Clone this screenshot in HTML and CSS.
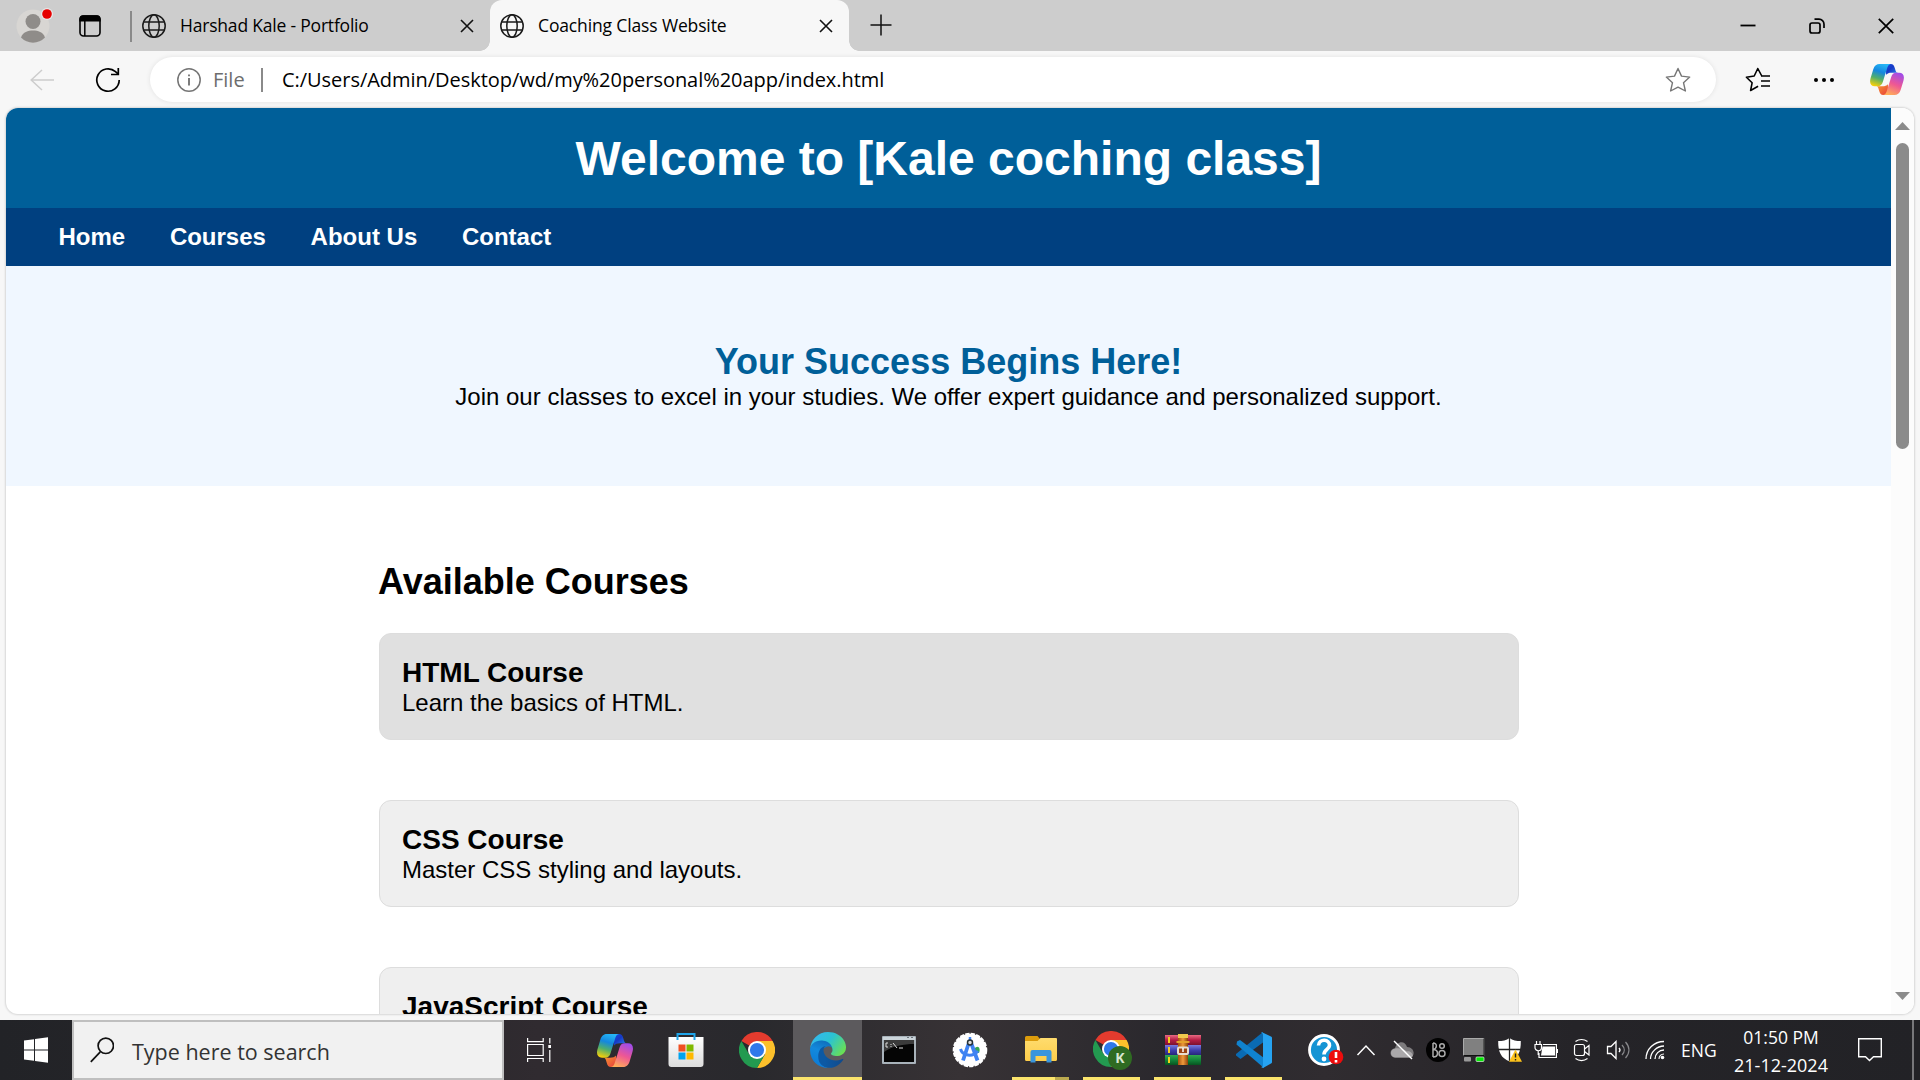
FILE: index.html
```html
<!DOCTYPE html>
<html lang="en">
<head>
<meta charset="utf-8">
<title>Coaching Class Website</title>
<link rel="stylesheet" href="styles.css">
</head>
<body>
<svg class="defs" width="0" height="0" aria-hidden="true">
  <defs>
    <linearGradient id="cpA" x1="0.6" y1="0" x2="0.3" y2="1"><stop offset="0" stop-color="#25b5f5"/><stop offset=".35" stop-color="#1487df"/><stop offset=".65" stop-color="#4fae6c"/><stop offset="1" stop-color="#f5cf0a"/></linearGradient>
    <linearGradient id="cpB" x1="0.7" y1="0" x2="0.3" y2="1"><stop offset="0" stop-color="#a14ce8"/><stop offset=".5" stop-color="#ee5794"/><stop offset="1" stop-color="#ffae58"/></linearGradient>
    <linearGradient id="cpC" x1="0" y1="0" x2="1" y2="1"><stop offset="0" stop-color="#1b4be0"/><stop offset=".4" stop-color="#1638c4"/><stop offset="1" stop-color="#2d86f0"/></linearGradient>
    <linearGradient id="cpD" x1="0" y1="0" x2="1" y2="1"><stop offset="0" stop-color="#f9a02f"/><stop offset="1" stop-color="#e83d3d"/></linearGradient>
    <linearGradient id="edA" x1="0.25" y1="0" x2="1" y2="0"><stop offset="0" stop-color="#0c59a4"/><stop offset="1" stop-color="#114a8b"/></linearGradient>
    <linearGradient id="edB" x1="0.6" y1="0" x2="0.3" y2="1"><stop offset="0" stop-color="#0f6cba"/><stop offset=".4" stop-color="#1389dc"/><stop offset="1" stop-color="#0a7ad6"/></linearGradient>
    <linearGradient id="edC" x1="0" y1="0.2" x2="1" y2="0.7"><stop offset="0" stop-color="#35b7f1"/><stop offset=".5" stop-color="#2bc3d2"/><stop offset="1" stop-color="#6be052"/></linearGradient>
    <linearGradient id="bag" x1="0" y1="0" x2="0" y2="1"><stop offset="0" stop-color="#fff"/><stop offset="1" stop-color="#dcdcdc"/></linearGradient>
    <linearGradient id="fold" x1="0" y1="0" x2="0" y2="1"><stop offset="0" stop-color="#ffdc6e"/><stop offset="1" stop-color="#fdcd4a"/></linearGradient>
    <linearGradient id="rr" x1="0" y1="0" x2="0" y2="1"><stop offset="0" stop-color="#e86b83"/><stop offset=".5" stop-color="#b51d45"/><stop offset="1" stop-color="#7c1030"/></linearGradient>
    <linearGradient id="rb" x1="0" y1="0" x2="0" y2="1"><stop offset="0" stop-color="#7c7ce0"/><stop offset=".5" stop-color="#4040b0"/><stop offset="1" stop-color="#26267a"/></linearGradient>
    <linearGradient id="rg" x1="0" y1="0" x2="0" y2="1"><stop offset="0" stop-color="#35a850"/><stop offset=".5" stop-color="#12853a"/><stop offset="1" stop-color="#075420"/></linearGradient>
    <linearGradient id="strap" x1="0" y1="0" x2="1" y2="0"><stop offset="0" stop-color="#a8520e"/><stop offset=".5" stop-color="#ee9a3c"/><stop offset="1" stop-color="#8e420a"/></linearGradient>
    <symbol id="globe" viewBox="0 0 24 24"><g fill="none" stroke="#1a1a1a" stroke-width="1.5"><circle cx="12" cy="12" r="11.2"/><ellipse cx="12" cy="12" rx="5.2" ry="11.2"/><path d="M1.8 8h20.4M1.8 16h20.4"/></g></symbol>
    <symbol id="cross" viewBox="0 0 14 14"><path d="M1 1l12 12M13 1L1 13" fill="none" stroke="#111" stroke-width="1.6"/></symbol>
    <symbol id="copilot" viewBox="0 0 36 33">
      <path d="M17 0h5c2.500 0 3.500 1.500 4.200 4l.9 3c.5 1.700 1.200 2.300 2.900 2.300h-7c-3 0-4.500.7-6 2.200z" fill="url(#cpC)"/>
      <path d="M19 33h-5c-2.500 0-3.500-1.500-4.200-4l-.9-3c-.5-1.700-1.200-2.300-2.900-2.300h7c3 0 4.500-.7 6-2.200z" fill="url(#cpD)"/>
      <path d="M10 0h12c-2 .3-3 1.800-3.800 4.300L13.600 19c-1 3.300-2.500 4.700-5.600 4.700H5c-4 0-6-3-4.500-8.400l2.900-9.800C4.700 1.500 7 0 10 0z" fill="url(#cpA)"/>
      <path d="M26 33H14c2-.3 3-1.800 3.800-4.300L22.400 14c1-3.300 2.500-4.700 5.600-4.700h3c4 0 6 3 4.500 8.400l-2.900 9.800C31.300 31.500 29 33 26 33z" fill="url(#cpB)"/>
    </symbol>
    <symbol id="chrome" viewBox="0 0 36 36">
      <path d="M18 18L2.400 9A18 18 0 0 1 33.600 9H18z" fill="#e33b2e"/>
      <path d="M33.600 9A18 18 0 0 1 18 36l7.800-13.500L18 9z" fill="#fcc02b"/>
      <path d="M18 36A18 18 0 0 1 2.400 9l7.800 13.500 7.800 4 7.800-4z" fill="#239a50"/>
      <circle cx="18" cy="18" r="9" fill="#fff"/><circle cx="18" cy="18" r="7.100" fill="#2f78ea"/>
    </symbol>
  </defs>
</svg>

<div class="desktop">
  <header class="tabstrip">
    <svg class="avatar" width="38" height="38" viewBox="0 0 38 38"><circle cx="17" cy="20" r="16.500" fill="#d8d6d3"/><circle cx="17" cy="15.500" r="7.500" fill="#8f8c89"/><path d="M5 31.500C7 26 12 24.500 17 24.500S27 26 29 31.500A16.500 16.500 0 0 1 5 31.500z" fill="#8f8c89"/><circle cx="31" cy="8" r="6" fill="#e8e8e8"/><circle cx="31" cy="8" r="4.800" fill="#e60000"/></svg>
    <svg class="workspaces" width="22" height="22" viewBox="0 0 22 22"><rect x="1" y="1" width="20" height="20" rx="3.500" fill="none" stroke="#000" stroke-width="1.600"/><path d="M.3 6.500V4A3.800 3.800 0 0 1 4 .2h14A3.800 3.800 0 0 1 21.700 4v2.500z"/><path d="M5.800 6v15" stroke="#000" stroke-width="1.500"/></svg>
    <span class="tab-rule"></span>
    <div class="tab tab-idle">
      <svg width="24" height="24"><use href="#globe"/></svg>
      <span class="tab-title title-a">Harshad Kale - Portfolio</span>
      <svg class="tab-close" width="14" height="14"><use href="#cross"/></svg>
    </div>
    <div class="tab tab-active">
      <svg width="24" height="24"><use href="#globe"/></svg>
      <span class="tab-title title-b">Coaching Class Website</span>
      <svg class="tab-close" width="14" height="14"><use href="#cross"/></svg>
    </div>
    <svg class="new-tab" width="22" height="22" viewBox="0 0 22 22"><path d="M11 .5v21M.5 11h21" stroke="#111" stroke-width="1.500"/></svg>
    <div class="window-buttons">
      <svg width="16" height="16" viewBox="0 0 16 16"><path d="M.5 7.500h15" stroke="#000" stroke-width="1.800"/></svg>
      <svg width="16" height="16" viewBox="0 0 16 16" fill="none" stroke="#000" stroke-width="1.700"><rect x="1" y="5" width="10" height="10" rx="2"/><path d="M5.500 1.200h4.500a5 5 0 0 1 5 5V10"/></svg>
      <svg width="16" height="16" viewBox="0 0 16 16"><path d="M.8.8l14.400 14.400M15.200.8L.8 15.200" stroke="#000" stroke-width="1.700"/></svg>
    </div>
  </header>

  <div class="toolbar">
    <svg class="back" width="24" height="22" viewBox="0 0 24 22"><path d="M12 1L1.200 11 12 21M1.200 11H24" fill="none" stroke="#cdcdcd" stroke-width="1.500"/></svg>
    <svg class="reload" width="26" height="26" viewBox="0 0 26 26" fill="none" stroke="#000" stroke-width="1.700"><path d="M24.200 13A11.200 11.200 0 1 1 20.500 4.700L23.200 7"/><path d="M23.300 1v6.500H16"/></svg>
    <div class="address">
      <svg width="24" height="24" viewBox="0 0 24 24"><circle cx="12" cy="12" r="11.200" fill="none" stroke="#757575" stroke-width="1.500"/><path d="M12 10v7.500M12 6.500v1.800" stroke="#666" stroke-width="1.700"/></svg>
      <span class="scheme">File</span>
      <span class="address-rule"></span>
      <span class="url">C:/Users/Admin/Desktop/wd/my%20personal%20app/index.html</span>
      <svg class="star" width="26" height="25" viewBox="0 0 26 25"><path d="M13 1.500l3.500 7.600 8.200 1-6.200 5.600 1.900 8.300L13 20.100 5.600 24l1.900-8.300L1.300 10.100l8.200-1z" fill="none" stroke="#767676" stroke-width="1.400" stroke-linejoin="round"/></svg>
    </div>
    <svg class="favorites" width="26" height="25" viewBox="0 0 26 25" fill="none" stroke="#000" stroke-width="1.600" stroke-linejoin="round"><path d="M16.500 8.500L12.800 1.500 9.200 9l-7.800 1.200 5.700 5.600L5.600 23.500l7.500-4.200M16 9h9M16 14h9M16 19h9"/></svg>
    <svg class="more" width="22" height="6" viewBox="0 0 22 6"><circle cx="3" cy="3" r="2"/><circle cx="11" cy="3" r="2"/><circle cx="19" cy="3" r="2"/></svg>
    <svg class="copilot-button" width="34" height="31"><use href="#copilot"/></svg>
  </div>

  <div class="viewport">
    <main class="page">
      <h1 class="banner">Welcome to [Kale coching class]</h1>
      <nav class="menu"><a>Home</a><a>Courses</a><a>About Us</a><a>Contact</a></nav>
      <section class="hero">
        <h2>Your Success Begins Here!</h2>
        <p>Join our classes to excel in your studies. We offer expert guidance and personalized support.</p>
      </section>
      <section class="courses">
        <h2>Available Courses</h2>
        <article class="card card-hover"><h3>HTML Course</h3><p>Learn the basics of HTML.</p></article>
        <article class="card"><h3>CSS Course</h3><p>Master CSS styling and layouts.</p></article>
        <article class="card"><h3>JavaScript Course</h3></article>
      </section>
    </main>
    <div class="scrollbar">
      <svg width="15" height="8" viewBox="0 0 15 8"><path d="M0 8L7.500 0 15 8z" fill="#8b8b8b"/></svg>
      <span class="thumb"></span>
      <svg class="arrow-down" width="15" height="8" viewBox="0 0 15 8"><path d="M0 0h15L7.500 8z" fill="#8b8b8b"/></svg>
    </div>
  </div>

  <footer class="taskbar">
    <div class="start"><svg width="24" height="26" viewBox="0 0 24 26" fill="#fff"><path d="M0 3.600l10-1.300V12.500H0zM11 2.100L24 .3v12.200H11zM0 13.500h10v10.200L0 22.400zM11 13.500h13v12.200L11 23.900z"/></svg></div>
    <div class="search">
      <svg width="24" height="26" viewBox="0 0 24 26" fill="none" stroke="#111" stroke-width="1.700"><circle cx="15.800" cy="8.800" r="7.700"/><path d="M10.300 14.800L.8 24.800"/></svg>
      <span>Type here to search</span>
    </div>
    <div class="task-view"><svg width="24" height="24" viewBox="0 0 24 24" fill="none" stroke="#fff" stroke-width="1.200"><path d="M.6 0v3.600h15.600V0M.6 24v-3.500h15.600V24M.6 6.500h15.600v11H.6zM22.800 0v5.500M22.800 12v12"/><path d="M21.300 7h3v3h-3z" fill="#fff" stroke="none"/></svg></div>
    <div class="app"><svg width="36" height="33"><use href="#copilot"/></svg></div>
    <div class="app"><svg width="36" height="36" viewBox="0 0 36 36"><path d="M9.500 7V2h17v5" fill="none" stroke="#1fa5ea" stroke-width="2"/><path d="M.5 5h35v27a3 3 0 0 1-3 3h-29a3 3 0 0 1-3-3z" fill="url(#bag)"/><path d="M9.500 5v3M26.500 5v3" stroke="#1fa5ea" stroke-width="2"/><path fill="#f04f22" d="M10.500 12.500h7v7h-7z"/><path fill="#7fb900" d="M18.500 12.500h7v7h-7z"/><path fill="#00a3ee" d="M10.500 20.500h7v7h-7z"/><path fill="#feb800" d="M18.500 20.500h7v7h-7z"/></svg></div>
    <div class="app"><svg width="36" height="36"><use href="#chrome"/></svg></div>
    <div class="app app-current"><svg width="36" height="36" viewBox="0 0 256 256">
      <path fill="url(#edB)" d="M105.730 246.290A79.200 79.200 0 0 1 83 225a80.720 80.720 0 0 1 34.130-120c3.120-1.470 8.450-4.130 15.540-4a32.350 32.350 0 0 1 25.690 13 31.880 31.880 0 0 1 6.360 18.660c0-.21 24.460-79.600-80-79.600-43.900 0-84.700 35-84.700 73.210a130.150 130.150 0 0 0 12.110 56 128 128 0 0 0 156.380 67.110 75.550 75.550 0 0 1-62.780-3z"/>
      <path fill="url(#edA)" d="M231 191.460a93.730 93.730 0 0 1-10.540 4.710 101.870 101.870 0 0 1-35.900 6.460c-47.320 0-88.540-32.550-88.540-74.320A31.480 31.480 0 0 1 112.460 101c-42.800 1.800-53.800 46.400-53.800 72.530 0 73.880 68.090 81.370 82.760 81.370 7.910 0 19.840-2.300 27-4.560l1.310-.44a128.340 128.340 0 0 0 66.600-52.800 4 4 0 0 0-5.320-5.640z"/>
      <path fill="url(#edC)" d="M152.330 148.860c-.81 1.050-3.300 2.500-3.300 5.660 0 2.610 1.700 5.120 4.720 7.230 14.380 10 41.490 8.680 41.560 8.680a59.560 59.560 0 0 0 30.270-8.350 61.380 61.380 0 0 0 30.430-52.880c.26-22.410-8-37.310-11.340-43.910C223.470 23.840 177.720 0 128 0A128 128 0 0 0 0 126.200c.48-36.540 36.800-66.050 80-66.050 3.500 0 23.460.34 42 10.070 16.340 8.580 24.900 18.940 30.850 29.210 6.180 10.670 7.280 24.150 7.280 29.520s-2.740 13.330-7.800 19.910z"/>
    </svg></div>
    <div class="app"><svg width="34" height="28" viewBox="0 0 34 28"><rect width="34" height="28" rx="1" fill="#a9b3bb"/><path d="M1 1h32v3H1z" fill="#cbd4da"/><path d="M2 4h30v22H2z" fill="#050505"/><path d="M2 4h30v4C22 8 10 10 2 16z" fill="#3b3b3b"/><path d="M6 7H4v4h2M9 8v1M9 10v1M11 7l4 5M17 12h4" stroke="#ddd" stroke-width="1" fill="none"/><path d="M25 1.500h2M29 1.500h2" stroke="#6b747c"/></svg></div>
    <div class="app"><svg width="36" height="36" viewBox="0 0 36 36"><circle cx="18" cy="18" r="16.300" fill="#fff" stroke="#fff" stroke-width="2" stroke-dasharray="4.300 1.200"/><path d="M22 17c4-5 7-1 5 4h-4z" fill="#34a853"/><path d="M16.500 12L11 28.500M19.500 12l6 16.500" stroke="#3f83f2" stroke-width="3.800"/><path d="M8.500 17c2 7 12 8.500 17.500 2" fill="none" stroke="#3f83f2" stroke-width="3"/><path d="M18 5v5" stroke="#3f83f2" stroke-width="2.500"/><circle cx="18" cy="10.500" r="2.500" fill="#ddd" stroke="#263238" stroke-width="1.500"/></svg></div>
    <div class="app app-open app-stacked"><svg width="32" height="28" viewBox="0 0 32 28"><path d="M0 1.500A1.500 1.500 0 0 1 1.500 0h11l2.500 3v3H0z" fill="#dc9c0c"/><path d="M0 5h12.500L15.500 2H31a1 1 0 0 1 1 1v20.500a1.500 1.500 0 0 1-1.500 1.500h-29A1.500 1.500 0 0 1 0 23.500z" fill="url(#fold)"/><path d="M5.500 26.500V16a2 2 0 0 1 2-2h17a2 2 0 0 1 2 2v10.500h-5V20h-11v6.500z" fill="#3a95dc"/></svg></div>
    <div class="app app-open"><svg width="40" height="40" viewBox="0 0 40 40"><g transform="translate(1 1)"><use href="#chrome" width="36" height="36"/></g><circle cx="28" cy="28" r="12" fill="#2f6b22"/><text x="28" y="33" text-anchor="middle" class="badge-letter">K</text></svg></div>
    <div class="app app-open"><svg width="36" height="32" viewBox="0 0 36 32"><rect y="1" width="36" height="10" fill="url(#rr)"/><rect y="11" width="36" height="10" fill="url(#rb)"/><rect y="21" width="36" height="10" fill="url(#rg)"/><path d="M3 3h2v6H3zM3 13h2v6H3zM3 23h2v6H3z" fill="#f4cf1e"/><rect x="13" width="10" height="31" fill="url(#strap)"/><path d="M13 0h10v4H13z" fill="#f1c94d"/><path d="M11.500 8h13" stroke="#e6a12c" stroke-width="2"/><rect x="13" y="13.500" width="10" height="6.500" rx="1" fill="#9c4514" stroke="#e9dfcf" stroke-width="2"/><path d="M18 14v4" stroke="#fff" stroke-width="1.500"/></svg></div>
    <div class="app app-open"><svg width="36" height="36" viewBox="0 0 36 36"><path d="M27 0v10.500L4.500 27 0 23.500v-1.500z" fill="#0a6bb3"/><path d="M1 9.500l3-1.500L28 26v10L.5 12.500z" fill="#1083cf"/><path d="M26 .2L35 4.500a1.500 1.500 0 0 1 1 1.500v24a1.500 1.500 0 0 1-1 1.500L27 36l-2-1c1.500 0 2-1 2-2V3c0-1.500-.5-2-2-2z" fill="#26a3f1"/></svg></div>
    <div class="help"><svg width="36" height="33" viewBox="0 0 36 33"><circle cx="16" cy="16" r="14.500" fill="#1594d4" stroke="#fff" stroke-width="2.800"/><path d="M10.500 11.500c.5-7.500 11.500-6.500 11 0-.3 4-5.500 4-5.500 9" fill="none" stroke="#fff" stroke-width="3.600"/><circle cx="16" cy="25" r="2.400" fill="#fff"/><circle cx="28" cy="23" r="7.300" fill="#ed0c0c"/><path d="M28 18v6M28 26v2.500" stroke="#fff" stroke-width="2.600"/></svg></div>
    <div class="tray"><svg width="20" height="12" viewBox="0 0 20 12"><path d="M1.500 11L10 2l8.500 9" fill="none" stroke="#fff" stroke-width="1.500"/></svg></div>
    <div class="tray"><svg width="24" height="20" viewBox="0 0 24 20"><path d="M5 17.500a4.500 4.500 0 0 1 0-9C6 1.500 15-.5 17 7c8 0 9 10.500 2 10.500z" fill="#7d7b7d"/><path d="M6 17.500a4.500 4.500 0 0 1-1-9c5-1 9 1 12 3 4-2 9 6 3 6z" fill="#aaa8aa"/><path d="M4 1l18 18" stroke="#fff" stroke-width="1.400"/></svg></div>
    <div class="tray"><svg width="24" height="24" viewBox="0 0 24 24"><circle cx="12" cy="12" r="12" fill="#020202"/><g fill="none" stroke="#aaa" stroke-width="1.500"><path d="M7 5v14M7 5c5 0 4 6 0 6.500 6 0 6 7.500 0 7.500"/><circle cx="16" cy="8" r="2.300"/><circle cx="16" cy="15.500" r="3"/></g></svg></div>
    <div class="tray"><svg width="22" height="24" viewBox="0 0 22 24"><path d="M.5.500h20.500v17H.5z" fill="#808080" stroke="#aaa"/><path d="M21 .5v17H.5" fill="none" stroke="#111"/><rect x="1" y="19" width="7" height="4.500" rx="1" fill="#999"/><rect x="13" y="19" width="8" height="4.500" rx="1" fill="#08e808" stroke="#fff" stroke-width=".6"/></svg></div>
    <div class="tray"><svg width="24" height="24" viewBox="0 0 24 24"><path d="M11.500 0c3 2.500 7 3 11.300 3C23 14 20 20 11.500 23.500 3 20 0 14 .2 3 4.500 3 8.500 2.500 11.500 0z" fill="#fff"/><path d="M11.500 0v24M0 11.500h23" stroke="#222" stroke-width="1.300"/><path d="M17.500 11.500L24 23.800H11z" fill="#fcc21b"/><path d="M17.500 15.500v4M17.500 21v1.500" stroke="#222" stroke-width="1.400"/></svg></div>
    <div class="tray"><svg width="24" height="20" viewBox="0 0 24 20"><path d="M8.500 6.500h12.500v9H7z" fill="#fff"/><g fill="none" stroke="#fff" stroke-width="1.200"><path d="M9 4.500h13.400v13H5V13M23.400 9v4M2.500 1v3M6 1v3M1 4.500h6.500v3a3.200 3.200 0 0 1-6.500 0zM4.200 11v4"/></g></svg></div>
    <div class="tray"><svg width="18" height="24" viewBox="0 0 18 24" fill="none" stroke="#fff" stroke-width="1.200"><rect x="1.500" y="6.500" width="10" height="11" rx="2"/><path d="M11.500 11l4.500-3.500v9.500l-4.500-3.500M2.500 3.500C6 .8 11 .8 14.500 3.500M2.500 20.500c3.500 2.700 8.500 2.700 12 0"/></svg></div>
    <div class="tray"><svg width="24" height="20" viewBox="0 0 24 20" fill="none" stroke="#fff" stroke-width="1.300"><path d="M1.500 6.500H5l5-5v17l-5-5H1.500z"/><path d="M13 8c1.200 1.200 1.200 2.800 0 4"/><path d="M16 5c3 3 3 7 0 10M19.500 2c4.500 5 4.500 11 0 16" stroke="#88888b"/></svg></div>
    <div class="tray wifi"><svg width="20" height="20" viewBox="0 0 20 20" fill="none" stroke="#fff" stroke-width="1.300"><path d="M1 19C1 9 9 1.500 19 1.500M5.500 19C5.500 12 12 6 19 6M10 19c0-5 4-9 9-9"/><path d="M14 19c0-3 2-5 5-5" stroke-width="1.100"/><circle cx="17.500" cy="17.500" r="1.800" fill="#fff" stroke="none"/></svg></div>
    <span class="language">ENG</span>
    <div class="clock"><span class="time">01:50 PM</span><span class="date">21-12-2024</span></div>
    <svg class="notice" width="24" height="24" viewBox="0 0 24 24"><path d="M.7.700h22.600v18H15.500L11.500 22.500 7.500 18.700H.7z" fill="none" stroke="#fff" stroke-width="1.400"/></svg>
    <span class="peek"></span>
  </footer>
</div>
</body>
</html>
```
FILE: styles.css
```css
* { box-sizing: border-box; }
body { margin: 0; overflow: hidden; font-family: "Open Sans", "Noto Sans", sans-serif; color: #000; }
h1, h2, h3, p { margin: 0; }
svg { display: block; flex: none; }
span { white-space: nowrap; }
.defs { position: absolute; }

.desktop { width: 1920px; height: 1080px; display: flex; flex-direction: column; background: #f7f7f7; }

/* tab strip */
.tabstrip { height: 51px; display: flex; align-items: center; background: #cdcdcd; flex: none; }
.avatar { margin: 0 0 2px 16px; }
.workspaces { margin-left: 25px; }
.tab-rule { width: 2px; height: 31px; margin: 2px 0 0 29px; background: #8a8a8a; }
.tab { height: 51px; display: flex; align-items: center; padding-top: 1px; }
.tab-idle { width: 358px; padding-left: 10px; }
.tab-active { position: relative; width: 359px; padding-left: 10px; background: #f7f7f7; border-radius: 12px 12px 0 0; }
.tab-active::before, .tab-active::after { content: ""; position: absolute; bottom: 0; width: 10px; height: 10px; }
.tab-active::before { left: -10px; background: radial-gradient(circle at 0 0, #cdcdcd 9.5px, #f7f7f7 10px); }
.tab-active::after { right: -10px; background: radial-gradient(circle at 100% 0, #cdcdcd 9.5px, #f7f7f7 10px); }
.tab-title { margin: 0 0 2px 14px; font-size: 17.5px; line-height: 24px; }
.title-a { letter-spacing: -.2px; }
.title-b { letter-spacing: -.14px; }
.tab-close { margin: 0 16px 0 auto; }
.new-tab { margin: 0 0 2px 21px; }
.window-buttons { display: flex; gap: 53px; margin: 0 26px 0 auto; }

/* toolbar */
.toolbar { height: 57px; display: flex; align-items: center; flex: none; }
.back { margin-left: 30px; }
.reload { margin-left: 41px; }
.address { width: 1566px; height: 45px; margin-left: 29px; padding: 0 25px 0 27px; display: flex; align-items: center; background: #fff; border-radius: 23px; box-shadow: 0 0 5px rgba(0, 0, 0, .09); }
.scheme { width: 48px; margin-left: 12px; font-size: 20px; color: #6d6d6d; }
.address-rule { width: 2px; height: 24px; background: #8a8a8a; }
.url { margin-left: 19px; font-size: 20px; letter-spacing: -.04px; }
.star { margin-left: auto; }
.favorites { margin-left: 29px; }
.more { margin-left: 42px; }
.copilot-button { margin-left: 35px; }

/* web page */
.viewport { width: 1908px; height: 906px; margin-left: 6px; display: flex; overflow: hidden; background: #fff; border-radius: 12px; box-shadow: 0 0 2px 1px rgba(0, 0, 0, .13); flex: none; }
.page { width: 1885px; font-family: "Liberation Sans", Arial, sans-serif; font-size: 24px; line-height: 28px; }
.banner { height: 100px; padding-top: 23px; background: #005f99; color: #fff; font-size: 48px; line-height: 55px; text-align: center; }
.menu { height: 58px; display: flex; align-items: center; gap: 44.7px; padding-left: 52.5px; background: #004080; color: #fff; font-weight: bold; }
.hero { height: 220px; padding-top: 75px; background: #f0f7ff; text-align: center; }
.hero h2 { margin-bottom: 1px; color: #005f99; font-size: 36px; line-height: 41px; }
.courses { width: 1140px; margin-left: 373px; padding-top: 75px; }
.courses h2 { margin: 0 0 31px -1px; font-size: 36px; line-height: 41px; }
.card { height: 107px; margin-bottom: 60px; padding: 22px; background: #efefef; border: 1px solid #ddd; border-radius: 12px; }
.card-hover { background: #e0e0e0; }
.card h3 { font-size: 28px; line-height: 33px; }
.card p { line-height: 28px; }
.scrollbar { width: 23px; padding: 14px 0; display: flex; flex-direction: column; align-items: center; background: #fcfcfc; }
.thumb { width: 13px; height: 306px; margin-top: 13px; border-radius: 7px; background: #8b8b8b; }
.arrow-down { margin-top: auto; }

/* taskbar */
.taskbar { height: 60px; margin-top: 6px; display: flex; align-items: center; color: #fff; background: linear-gradient(90deg, #222327 0, #29272b 20%, #302b30 28%, #29292d 39%, #373235 50%, #2a282d 61%, #302c30 69%, #252428 82%, #222226 100%); flex: none; }
.start { width: 72px; padding-left: 24px; }
.search { width: 432px; height: 60px; padding-left: 16px; display: flex; align-items: center; gap: 18px; color: #333; background: #f1f1f1; border: 2px solid #bfbfbf; }
.search span { font-size: 21.5px; padding-top: 2px; }
.task-view { width: 75px; padding-left: 23px; }
.app { width: 71px; height: 60px; display: flex; align-items: center; justify-content: center; border: solid transparent; border-width: 0 1px; background-clip: padding-box; }
.app-current { background-color: #5c5a5d; box-shadow: inset 0 -3px #fbe46c; }
.app-open { background: linear-gradient(#fbe46c, #fbe46c) 6px 100% / 57px 3px no-repeat; }
.app-stacked { background: linear-gradient(90deg, #fbe46c 43px, #bba94f 43px) 6px 100% / 57px 3px no-repeat; }
.badge-letter { font: bold 14px "Open Sans", sans-serif; fill: #d8e6d2; }
.help { width: 59px; padding-left: 19px; }
.tray { width: 36px; display: flex; justify-content: center; }
.wifi { padding-left: 2px; }
.language { width: 47px; margin-left: 9px; font-size: 17.5px; }
.clock { width: 106px; display: flex; flex-direction: column; align-items: center; line-height: 28px; padding-top: 1px; }
.time { font-size: 17.5px; }
.date { font-size: 18px; }
.notice { margin: 0 0 0 24px; }
.peek { width: 2px; height: 60px; margin-left: 30px; background: #77777a; }
```
